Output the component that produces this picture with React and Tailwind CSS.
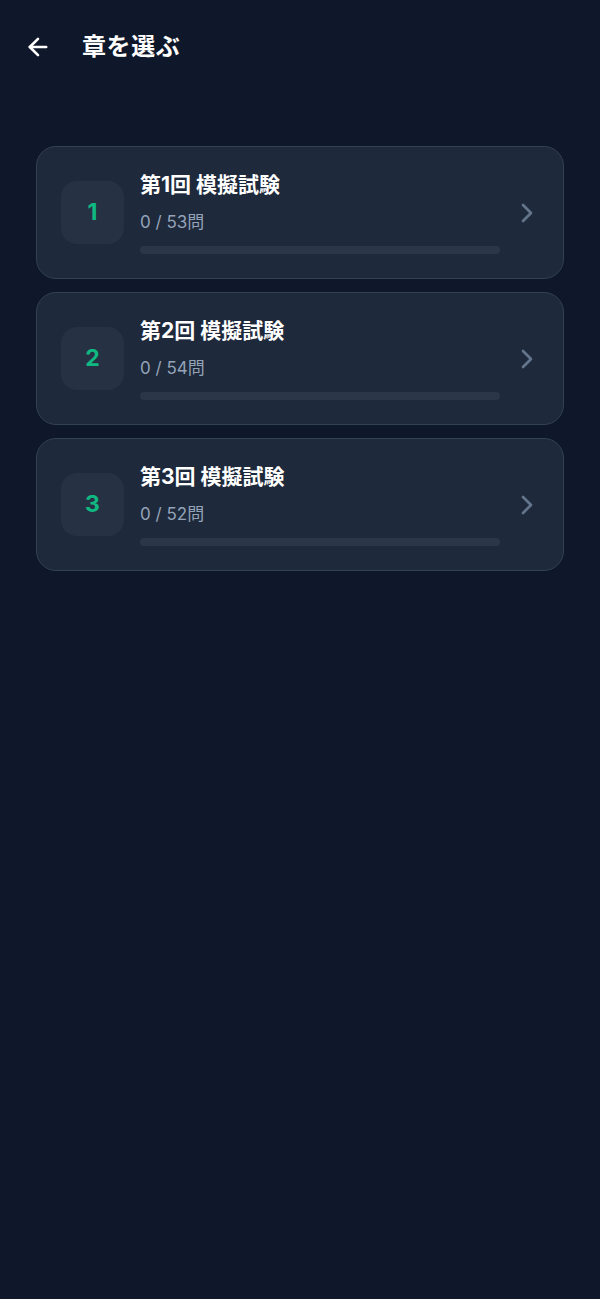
import { ArrowLeft, ChevronRight } from "lucide-react";

const chapters = [
    { no: 1, title: "第1回 模擬試験", done: 0, total: 53 },
    { no: 2, title: "第2回 模擬試験", done: 0, total: 54 },
    { no: 3, title: "第3回 模擬試験", done: 0, total: 52 },
];

function ChapterCard({ chapter }) {
    const pct = chapter.total ? (chapter.done / chapter.total) * 100 : 0;
    return (
        <button
            type="button"
            className="w-full flex items-center gap-4 pl-6 pr-5 h-[133px] rounded-[20px] bg-[#1e293b] border border-[#334155] text-left"
        >
            {/* number */}
            <div className="w-[63px] h-[63px] shrink-0 rounded-2xl bg-[#263244] flex items-center justify-center">
                <span className="text-[23px] font-bold text-[#10b981]">{chapter.no}</span>
            </div>
            {/* body */}
            <div className="flex-1 flex flex-col">
                <span className="text-[21px] leading-7 font-bold text-white">{chapter.title}</span>
                <span className="mt-[11px] text-[17px] leading-6 text-[#94a3b8]">
                    {chapter.done} / {chapter.total}問
                </span>
                <div className="mt-3 h-2 w-full rounded-full bg-[#2b3749] overflow-hidden">
                    <div className="h-full bg-[#10b981]" style={{ width: `${pct}%` }} />
                </div>
            </div>
            <ChevronRight size={32} strokeWidth={2} className="ml-[-5px] shrink-0 text-[#64748b]" />
        </button>
    );
}

export default function App() {
    return (
        <div
            className="min-h-[1299px] w-full bg-[#0f172a]"
            style={{ fontFamily: 'Inter, "Noto Sans CJK JP", sans-serif' }}
        >
            {/* header */}
            <header className="flex items-center h-[94px] pl-6 gap-[30px]">
                <ArrowLeft size={28} strokeWidth={2.25} className="text-white" />
                <h1 className="text-[24px] font-bold text-white tracking-wide">章を選ぶ</h1>
            </header>

            {/* chapter list */}
            <div className="flex flex-col gap-[13px] px-9 pt-[52px]">
                {chapters.map((c) => (
                    <ChapterCard key={c.no} chapter={c} />
                ))}
            </div>
        </div>
    );
}
